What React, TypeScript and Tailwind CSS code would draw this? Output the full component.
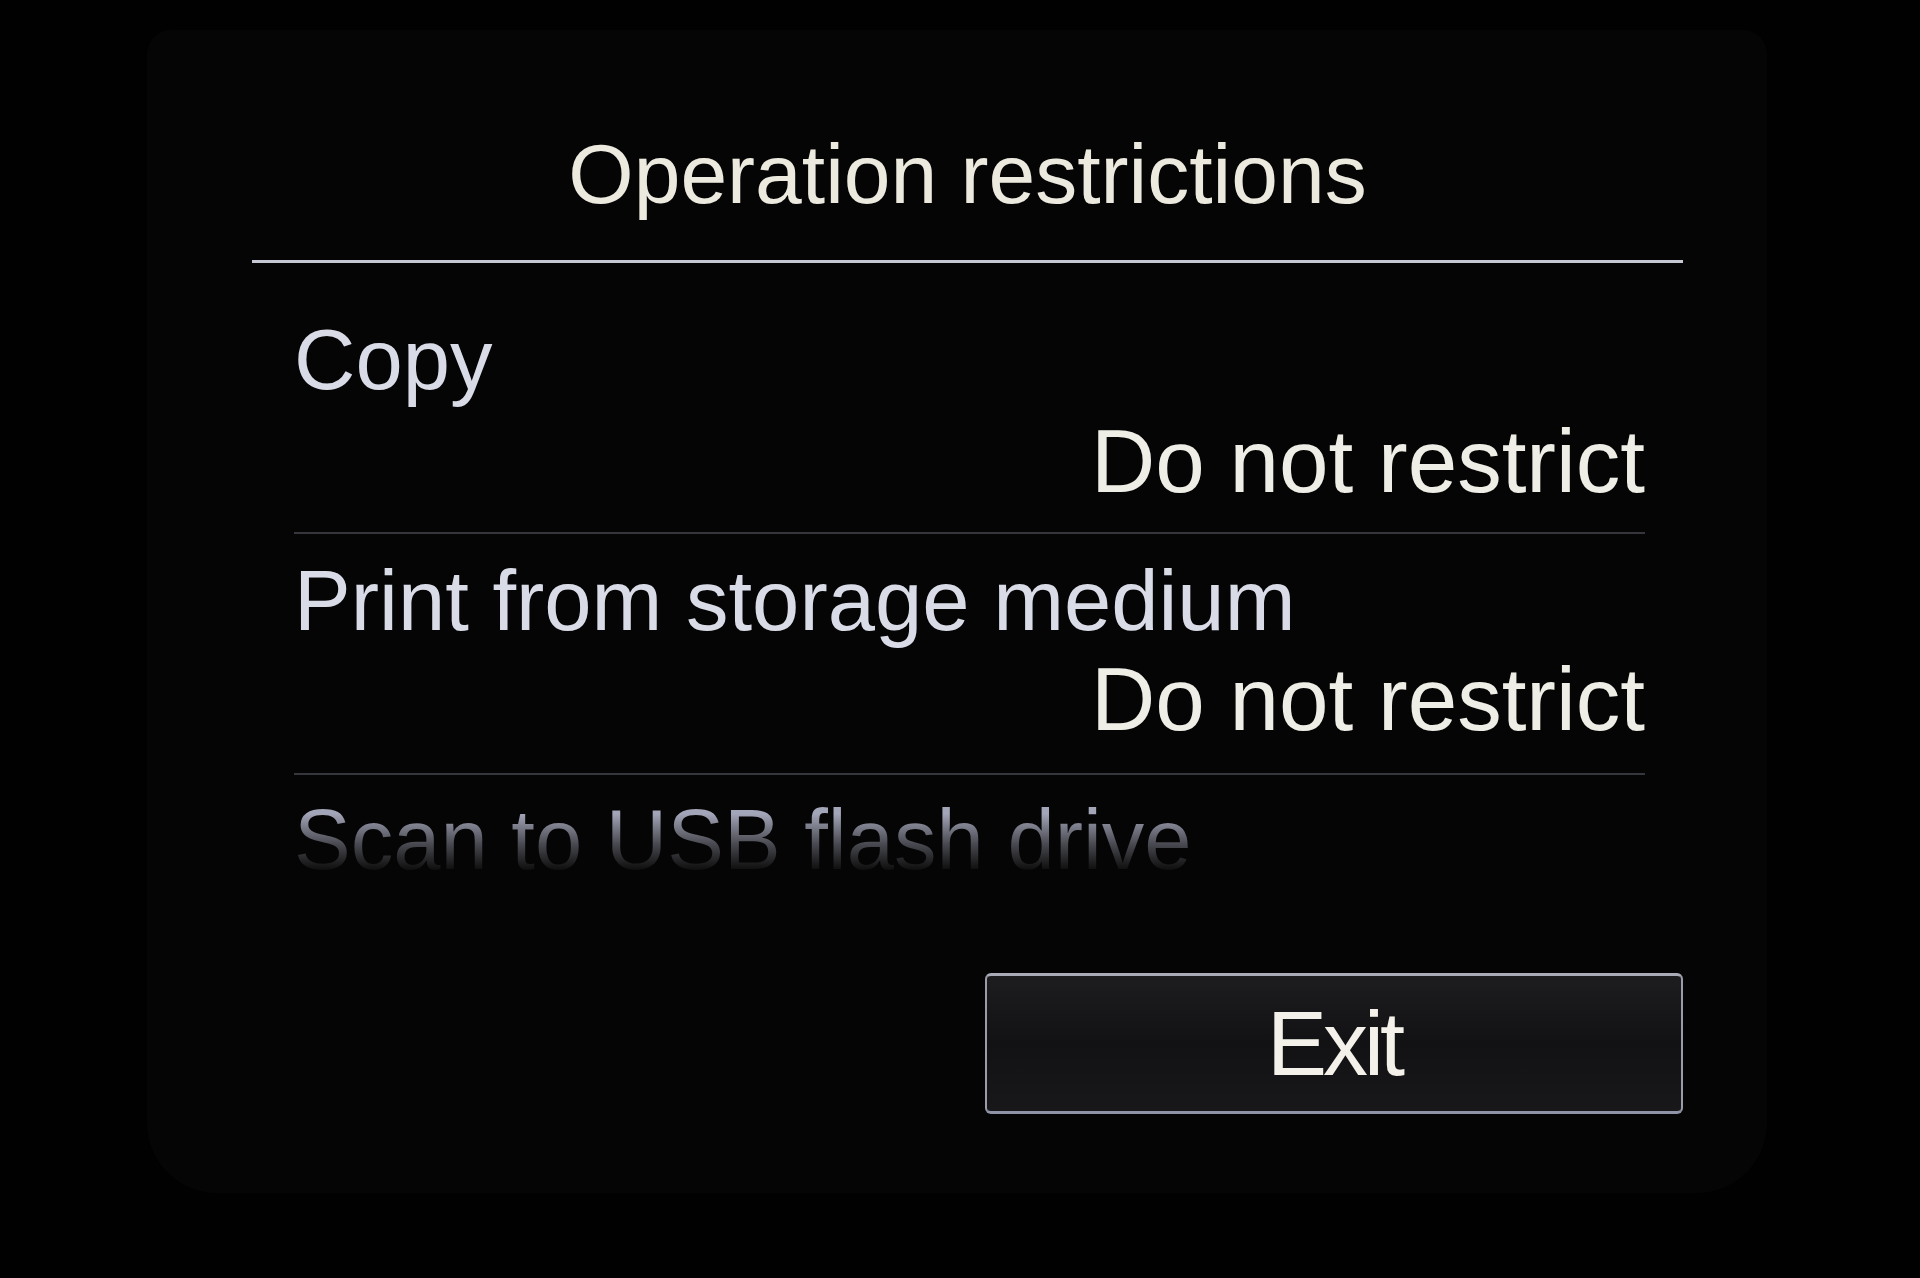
const font = { fontFamily: "'Liberation Sans', Arial, sans-serif" };

interface RestrictionRow {
  label: string;
  value: string;
}

const rows: RestrictionRow[] = [
  { label: "Copy", value: "Do not restrict" },
  { label: "Print from storage medium", value: "Do not restrict" },
];

const Row = ({ row, first }: { row: RestrictionRow; first: boolean }) => {
  return (
    <div className={first ? "mt-[54px]" : "mt-[24px]"}>
      <div className="text-[85px] leading-none text-[#d9dbe7] whitespace-nowrap">{row.label}</div>
      <div
        className={
          first
            ? "mt-[15px] text-right text-[89px] leading-none text-[#eeede6] whitespace-nowrap"
            : "mt-[12px] text-right text-[89px] leading-none text-[#eeede6] whitespace-nowrap"
        }
      >
        {row.value}
      </div>
      <div className={first ? "mt-[26px] h-[2px] bg-[#36373c]" : "mt-[29px] h-[2px] bg-[#36373c]"} />
    </div>
  );
};

export default function App() {
  return (
    <div className="w-[1920px] h-[1278px] overflow-hidden bg-[#010101] pl-[147px] pt-[30px]" style={font}>
      <div className="w-[1620px] h-[1163px] rounded-t-[24px] rounded-b-[70px] bg-[#050505] pl-[105px] pt-[102px]">
        <div className="w-[1431px]">
          <h1 className="h-[84px] text-center text-[84px] leading-none font-normal text-[#ece9df] whitespace-nowrap">
            Operation restrictions
          </h1>
          <div className="mt-[44px] h-[3px] bg-[#c6c8d3]" />

          <div className="pl-[42px] pr-[38px]">
            {rows.map((row, i) => (
              <Row key={row.label} row={row} first={i === 0} />
            ))}
            <div className="mt-[22px] text-[85px] leading-none whitespace-nowrap bg-linear-to-b from-[#a3a5b8] from-20% via-[#4a4b52] via-55% to-[#101010] to-85% bg-clip-text text-transparent">
              Scan to USB flash drive
            </div>
          </div>

          <div className="mt-[91px] flex justify-end">
            <button className="flex h-[141px] w-[698px] items-center justify-center rounded-[6px] border-x-2 border-y-[3px] border-x-[#9a9caa] border-t-[#a9abb6] border-b-[#8f93a8] bg-linear-to-b from-[#1d1d20] via-[#121214] to-[#18181a]">
              <span className="text-[90px] leading-none tracking-[-4px] text-[#f3f1e9]">Exit</span>
            </button>
          </div>
        </div>
      </div>
    </div>
  );
}
